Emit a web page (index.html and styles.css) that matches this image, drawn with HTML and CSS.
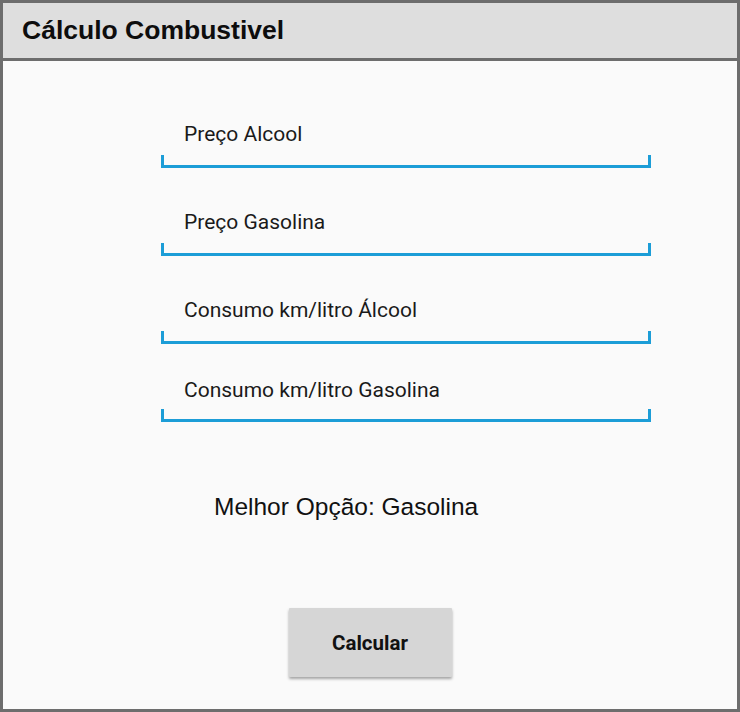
FILE: index.html
```html
<!DOCTYPE html>
<html lang="pt">
<head>
<meta charset="utf-8">
<title>Cálculo Combustivel</title>
<link rel="stylesheet" href="styles.css">
</head>
<body>
<div class="frame">
  <header class="appbar">
    <h1 class="appbar-title">Cálculo Combustivel</h1>
  </header>
  <main class="content">
    <div class="field">
      <div class="field-label">Preço Alcool</div>
      <div class="field-line"></div>
    </div>
    <div class="field">
      <div class="field-label">Preço Gasolina</div>
      <div class="field-line"></div>
    </div>
    <div class="field">
      <div class="field-label">Consumo km/litro Álcool</div>
      <div class="field-line"></div>
    </div>
    <div class="field field-tight">
      <div class="field-label">Consumo km/litro Gasolina</div>
      <div class="field-line"></div>
    </div>
    <p class="result">Melhor Opção: Gasolina</p>
    <div class="actions">
      <button class="btn">Calcular</button>
    </div>
  </main>
</div>
</body>
</html>
```

FILE: styles.css
```css
* { box-sizing: border-box; }
html, body { margin: 0; padding: 0; background: #fafafa; }
.frame {
  width: 740px;
  height: 712px;
  border: 3px solid #6d6d6d;
  background: #fafafa;
  display: flex;
  flex-direction: column;
}
.appbar {
  height: 58px;
  background: #dedede;
  border-bottom: 3px solid #6d6d6d;
  display: flex;
  align-items: center;
  padding-left: 19px;
}
.appbar-title {
  margin: 0;
  font-family: "Liberation Sans", Arial, Helvetica, sans-serif;
  font-weight: bold;
  font-size: 26.5px;
  line-height: 30px;
  color: #0d0d0d;
  padding-bottom: 2px;
}
.content {
  padding-top: 61px;
  display: flex;
  flex-direction: column;
}
.field {
  margin-left: 158px;
  width: 490px;
  margin-top: 42px;
}
.field:first-child { margin-top: 0; }
.field-tight { margin-top: 34px; }
.field-label {
  font-family: Roboto, "Noto Sans", sans-serif;
  font-size: 21px;
  line-height: 24px;
  color: #1a1a1a;
  padding-left: 23px;
  margin-bottom: 9px;
}
.field-tight .field-label { margin-bottom: 7px; }
.field-line {
  height: 13px;
  border-left: 3px solid #1c9dd7;
  border-right: 3px solid #1c9dd7;
  border-bottom: 3px solid #1c9dd7;
}
.result {
  margin: 72px 0 0 211px;
  font-family: "Liberation Sans", Arial, Helvetica, sans-serif;
  font-size: 24.5px;
  line-height: 26px;
  color: #111;
}
.actions {
  display: flex;
  justify-content: center;
  margin-top: 88px;
}
.btn {
  width: 163px;
  height: 69px;
  border: none;
  border-radius: 1px;
  background: #d6d6d6;
  box-shadow: 0 2px 3px rgba(0,0,0,0.35);
  font-family: Roboto, "Noto Sans", sans-serif;
  font-weight: bold;
  font-size: 20.5px;
  color: #111;
  padding: 0;
}
```
